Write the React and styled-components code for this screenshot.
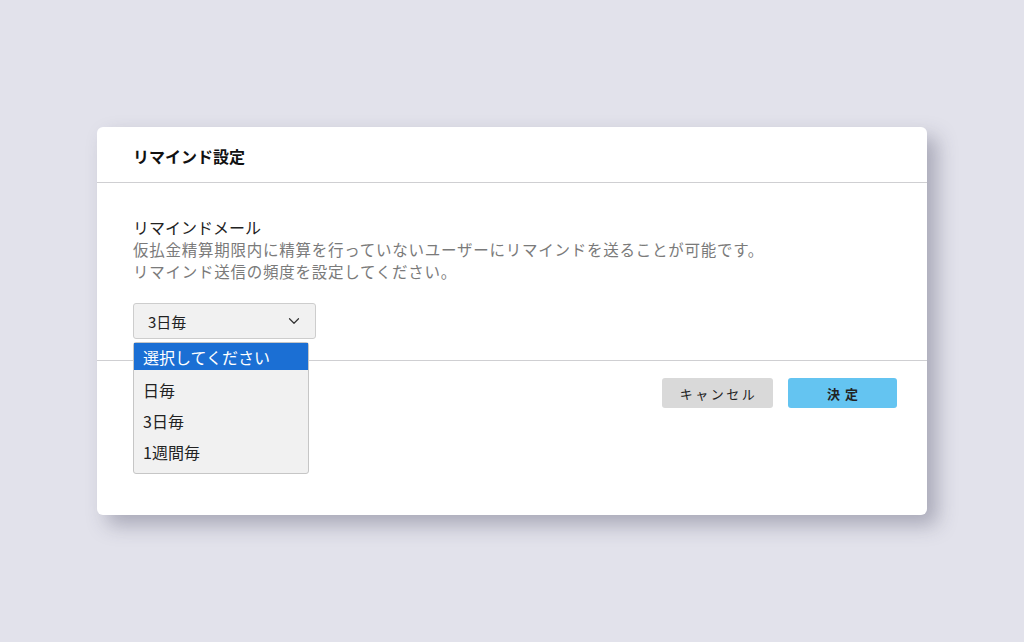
import React, { useState } from "react";
import styled, { createGlobalStyle } from "styled-components";
import { ChevronDown } from "lucide-react";

const GlobalStyle = createGlobalStyle`
  body {
    margin: 0;
    font-family: "Noto Sans CJK JP", "Noto Sans", sans-serif;
    background: #e2e2eb;
  }
`;

const Page = styled.div`
  min-height: 642px;
  display: flex;
  align-items: center;
  justify-content: center;
`;

const Card = styled.div`
  width: 830px;
  height: 388px;
  background: #fff;
  border-radius: 6px;
  box-shadow: 10px 10px 20px rgba(60, 60, 85, 0.34);
  display: flex;
  flex-direction: column;
`;

const Header = styled.div`
  height: 55px;
  padding: 0 36px;
  display: flex;
  align-items: center;
  border-bottom: 1.5px solid #cfcfd2;
`;

const Title = styled.h2`
  margin: 0;
  font-size: 16px;
  font-weight: 700;
  color: #111;
  padding-top: 2px;
`;

const Body = styled.div`
  padding: 33px 36px 21px;
  border-bottom: 1.5px solid #cfcfd2;
`;

const Label = styled.div`
  font-size: 16px;
  line-height: 22px;
  color: #222;
`;

const Desc = styled.p`
  margin: 0;
  font-size: 15.5px;
  line-height: 22px;
  color: #7a7a7a;
  letter-spacing: 0.75px;
`;

const SelectWrap = styled.div`
  position: relative;
  margin-top: 21px;
  width: 183px;
`;

const SelectBox = styled.div`
  height: 36px;
  box-sizing: border-box;
  border: 1px solid #cdcdcd;
  border-radius: 3px;
  background: #f1f1f1;
  display: flex;
  align-items: center;
  justify-content: space-between;
  padding: 0 12px 0 14px;
  font-size: 15px;
  color: #222;
`;

const Menu = styled.ul`
  position: absolute;
  top: 39px;
  left: 0;
  width: 176px;
  margin: 0;
  padding: 0 0 6px;
  list-style: none;
  box-sizing: border-box;
  background: #f1f1f1;
  border: 1px solid #c6c6c6;
  border-radius: 3px;
  z-index: 2;
`;

const Option = styled.li`
  height: ${(p) => (p.$active ? "27px" : "31px")};
  margin-bottom: ${(p) => (p.$active ? "4px" : "0")};
  display: flex;
  align-items: center;
  padding: 0 9px;
  font-size: 16px;
  color: ${(p) => (p.$active ? "#fff" : "#222")};
  background: ${(p) => (p.$active ? "#1b6fd4" : "transparent")};
`;

const Footer = styled.div`
  padding: 17px 30px 0;
  display: flex;
  justify-content: flex-end;
  gap: 15px;
`;

const Button = styled.button`
  width: ${(p) => p.$w}px;
  height: 30px;
  border: none;
  border-radius: 3px;
  font-family: inherit;
  font-size: 13px;
  font-weight: ${(p) => (p.$primary ? 700 : 400)};
  letter-spacing: ${(p) => (p.$primary ? "5px" : "2.5px")};
  color: #222;
  background: ${(p) => (p.$primary ? "#64c4f1" : "#d9d9d9")};
  padding: 0;
  padding-left: ${(p) => (p.$primary ? "5px" : "2px")};
`;

const options = ["選択してください", "日毎", "3日毎", "1週間毎"];

export default function App() {
  const [value] = useState("3日毎");
  return (
    <Page>
      <GlobalStyle />
      <Card>
        <Header>
          <Title>リマインド設定</Title>
        </Header>
        <Body>
          <Label>リマインドメール</Label>
          <Desc>仮払金精算期限内に精算を行っていないユーザーにリマインドを送ることが可能です。</Desc>
          <Desc>リマインド送信の頻度を設定してください。</Desc>
          <SelectWrap>
            <SelectBox>
              <span>{value}</span>
              <ChevronDown size={18} strokeWidth={1.6} color="#333" />
            </SelectBox>
            <Menu>
              {options.map((o, i) => (
                <Option key={o} $active={i === 0}>
                  {o}
                </Option>
              ))}
            </Menu>
          </SelectWrap>
        </Body>
        <Footer>
          <Button $w={111}>キャンセル</Button>
          <Button $w={109} $primary>
            決定
          </Button>
        </Footer>
      </Card>
    </Page>
  );
}
